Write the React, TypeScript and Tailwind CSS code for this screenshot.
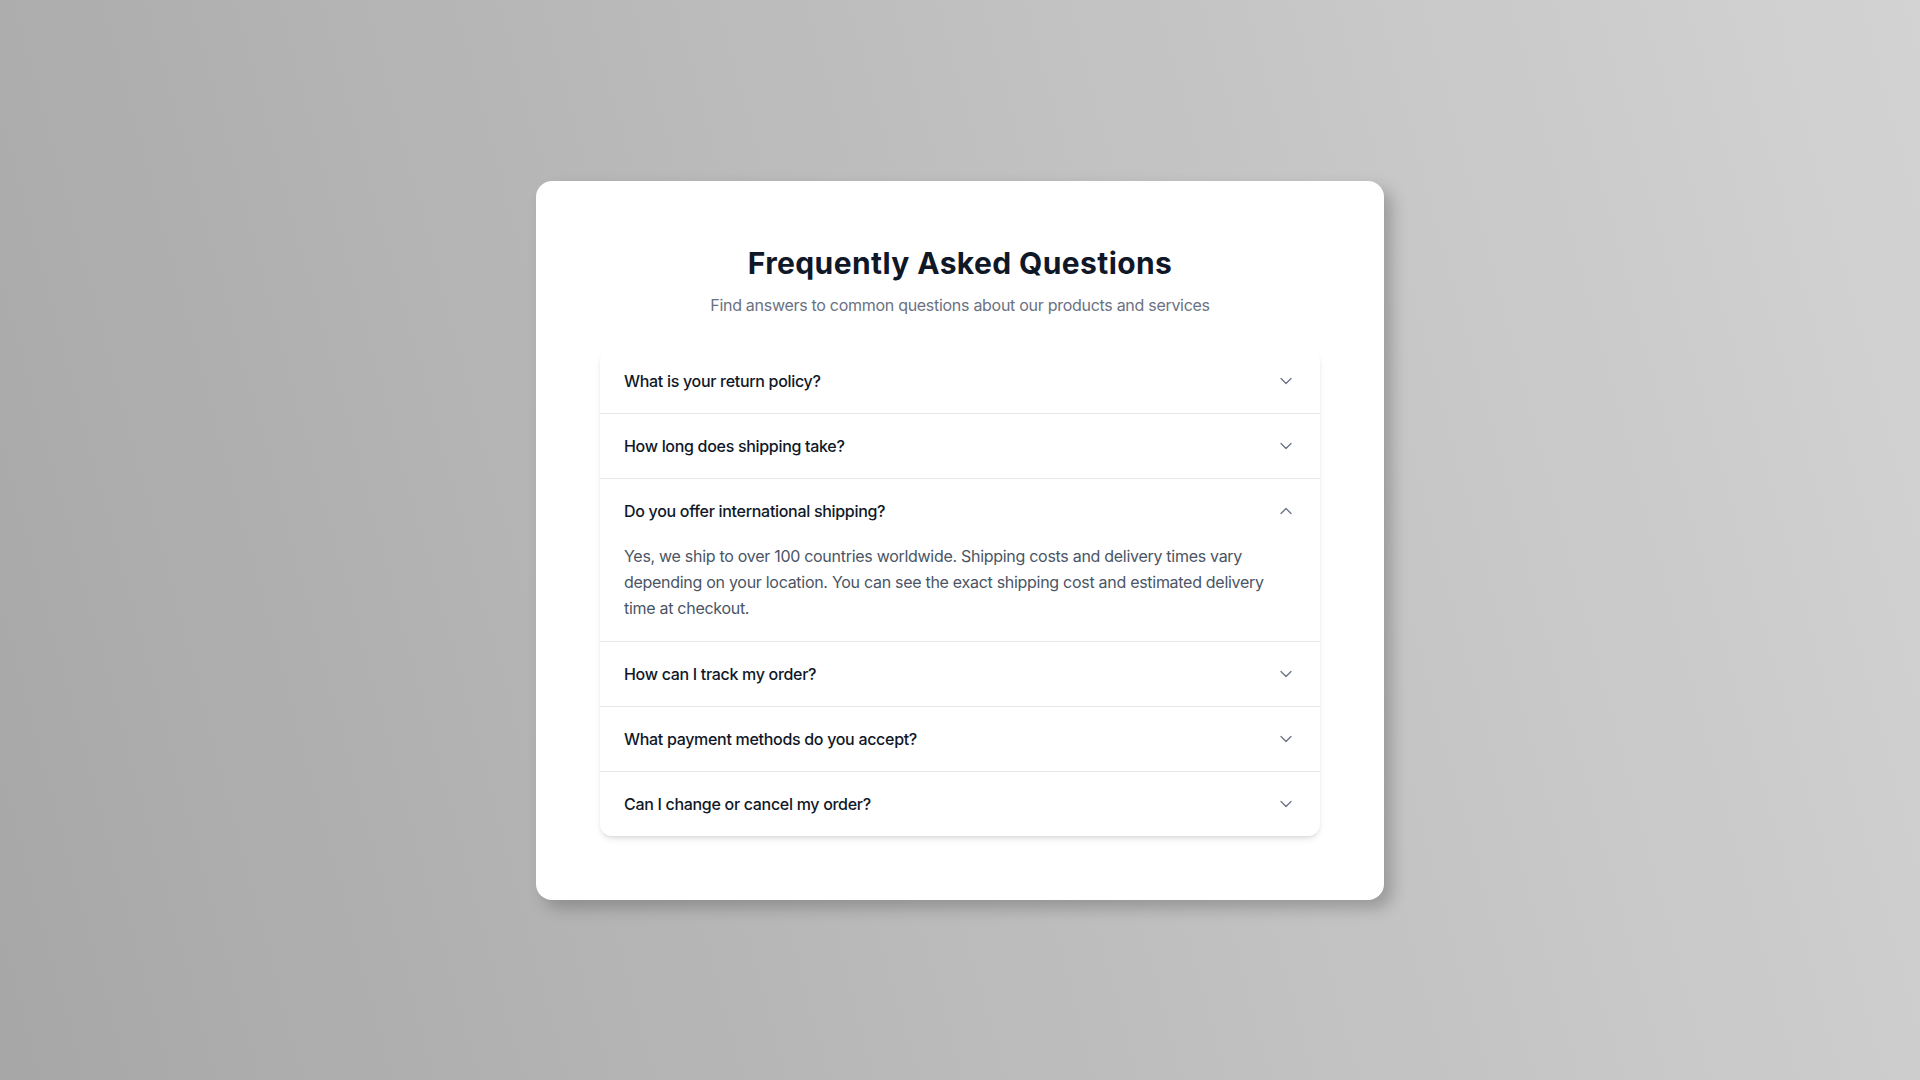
import { ChevronDown, ChevronUp } from 'lucide-react';

const faqs = [
  { q: 'What is your return policy?', a: '' },
  { q: 'How long does shipping take?', a: '' },
  {
    q: 'Do you offer international shipping?',
    a: 'Yes, we ship to over 100 countries worldwide. Shipping costs and delivery times vary depending on your location. You can see the exact shipping cost and estimated delivery time at checkout.',
  },
  { q: 'How can I track my order?', a: '' },
  { q: 'What payment methods do you accept?', a: '' },
  { q: 'Can I change or cancel my order?', a: '' },
];

export default function App() {
  const openIndex = 2;
  return (
    <div
      className="min-h-screen w-full flex items-center justify-center bg-[linear-gradient(75deg,#a7a7a7,#d3d3d3)]"
      style={{ fontFamily: 'Inter, "Noto Sans", sans-serif' }}
    >
      <div className="w-[848px] bg-white rounded-2xl p-16 shadow-[8px_8px_16px_rgba(0,0,0,0.22)]">
        <h1 className="text-3xl font-bold tracking-[0.013em] text-gray-900 text-center">
          Frequently Asked Questions
        </h1>
        <p className="mt-3 mb-8 text-base tracking-[-0.018em] text-gray-500 text-center">
          Find answers to common questions about our products and services
        </p>
        <div className="bg-white rounded-xl shadow-md divide-y divide-gray-200">
          {faqs.map((item, idx) => {
            const open = idx === openIndex;
            return (
              <div key={idx}>
                <button className="w-full flex items-center justify-between px-6 py-5 text-left">
                  <span className="text-base font-medium tracking-[-0.019em] text-gray-900">
                    {item.q}
                  </span>
                  {open ? (
                    <ChevronUp className="w-5 h-5 text-gray-500" strokeWidth={1.5} />
                  ) : (
                    <ChevronDown className="w-5 h-5 text-gray-500" strokeWidth={1.5} />
                  )}
                </button>
                {open && (
                  <div className="px-6 pb-5 text-base leading-relaxed tracking-[-0.018em] text-gray-600">
                    {item.a}
                  </div>
                )}
              </div>
            );
          })}
        </div>
      </div>
    </div>
  );
}
